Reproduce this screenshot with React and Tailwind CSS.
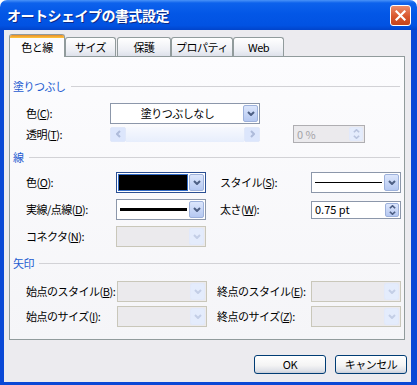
import clsx from "clsx";

const ui = "font-['Noto_Sans_CJK_JP','Noto_Sans',sans-serif]";

function Chevron({ dir = "down", color, w = 8, h = 5 }) {
  const pts = {
    down: "1,1 4,4 7,1",
    up: "1,4 4,1 7,4",
  };
  return (
    <svg width={w} height={h} viewBox="0 0 8 5" preserveAspectRatio="none">
      <polyline points={pts[dir]} fill="none" stroke={color} strokeWidth="2" />
    </svg>
  );
}

function SideChevron({ dir, color }) {
  return (
    <svg width="5" height="8" viewBox="0 0 5 8">
      <polyline points={dir === "left" ? "4,1 1,4 4,7" : "1,1 4,4 1,7"} fill="none" stroke={color} strokeWidth="2" />
    </svg>
  );
}

function DropBtn({ disabled }) {
  return (
    <div
      className={clsx(
        "flex w-[15px] shrink-0 items-center justify-center rounded-[2px] border",
        disabled
          ? "border-[#E2E9FA] bg-[#E4ECFC]"
          : "border-[#9DB1DB] bg-[linear-gradient(to_bottom,#DCE6FC,#B5C8F1)]"
      )}
    >
      <Chevron color={disabled ? "#C3CEE6" : "#4D5F84"} />
    </div>
  );
}

function Combo({ className, tone = "normal", children }) {
  return (
    <div
      className={clsx(
        "flex h-[21px] shrink-0 border p-[1px]",
        tone === "disabled" && "border-[#C9C7BA] bg-[#EBEAED]",
        tone === "normal" && "border-[#8C97AA] bg-white",
        tone === "focus" && "border-[#2B4F93] bg-white",
        className
      )}
    >
      <div className="flex min-w-0 flex-1 items-center">{children}</div>
      <DropBtn disabled={tone === "disabled"} />
    </div>
  );
}

function ScrollBtn({ dir }) {
  return (
    <div className="flex w-[16px] shrink-0 items-center justify-center rounded-[2px] border border-[#E0E8FA] bg-[#DCE6FC]">
      <SideChevron dir={dir} color="#AEBBDA" />
    </div>
  );
}

function Slider() {
  return (
    <div className="flex h-[15px] w-[150px] shrink-0">
      <ScrollBtn dir="left" />
      <div className="flex-1 bg-[linear-gradient(to_bottom,#F7F9FE,#E7EEFC)]" />
      <ScrollBtn dir="right" />
    </div>
  );
}

function Spin({ className, disabled, value }) {
  const c = disabled ? "#B9C4DE" : "#4D5F84";
  return (
    <div
      className={clsx(
        "flex shrink-0 border p-[1px]",
        disabled ? "border-[#AFAEB2] bg-[#EBEAED] text-[#A3A2A6]" : "border-[#8C97AA] bg-white text-black",
        className
      )}
    >
      <span className="flex-1 self-center pl-[2px] leading-none tracking-normal">{value}</span>
      <div
        className={clsx(
          "flex w-[14px] flex-col items-center justify-center gap-[2px] rounded-[2px] border",
          disabled ? "border-[#E2E9FA] bg-[#E4ECFC]" : "border-[#9DB1DB] bg-[linear-gradient(to_bottom,#DCE6FC,#B5C8F1)]"
        )}
      >
        <Chevron dir="up" color={c} w={7} h={4} />
        <Chevron dir="down" color={c} w={7} h={4} />
      </div>
    </div>
  );
}

function Label({ text, k, className }) {
  return (
    <div className={clsx("shrink-0 whitespace-nowrap", className)}>
      {text}(<u>{k}</u>):
    </div>
  );
}

function Section({ label, className }) {
  return (
    <div className={clsx("flex h-[14px] items-center pl-[3px] pr-[4px] leading-[14px]", className)}>
      <span className="text-[#1D5BD0]">{label}</span>
      <div className="ml-[5px] h-px flex-1 bg-[#D2D2D6]" />
    </div>
  );
}

const tabs = [
  { label: "サイズ", w: "w-[51px]" },
  { label: "保護", w: "w-[54px] ml-[1px]" },
  { label: "プロパティ", w: "w-[62px]" },
  { label: "Web", w: "w-[51px]" },
];

export default function App() {
  return (
    <div className={clsx("flex h-[385px] w-[417px] flex-col overflow-hidden text-[11px] tracking-[-0.5px] text-black", ui)}>
      {/* title bar */}
      <div className="flex h-[30px] shrink-0 items-center justify-between rounded-t-[7px] bg-[linear-gradient(to_bottom,#4A93F8_0%,#0D62EC_10%,#0357E7_45%,#0152E2_85%,#0144CB_100%)] pl-[7px] pr-[6px]">
        <span className="text-[14px] font-bold tracking-[-0.5px] text-white [text-shadow:1px_1px_#0B2A8A]">
          オートシェイプの書式設定
        </span>
        <div className="flex h-[21px] w-[21px] items-center justify-center rounded-[3px] border border-white bg-[linear-gradient(to_bottom,#EB8C6C,#D9572D_55%,#C4441C)]">
          <svg width="11" height="11" viewBox="0 0 11 11">
            <path d="M1.5 1.5 L9.5 9.5 M9.5 1.5 L1.5 9.5" stroke="white" strokeWidth="2.2" strokeLinecap="square" />
          </svg>
        </div>
      </div>

      {/* window body */}
      <div className="flex flex-1 flex-col border-b-[3px] border-l-4 border-r-[6px] border-[#0A48D6] bg-[#ECEBEF] pl-[5px] pr-[4px] pt-[4px]">
        {/* tabs */}
        <div className="flex h-[22px] items-end">
          <div className="relative z-10 -mb-px flex h-[23px] w-[56px] flex-col rounded-t-[3px] border border-b-0 border-[#919B9C] bg-[#FCFCFE]">
            <div className="h-[3px] rounded-t-[2px] bg-[linear-gradient(to_bottom,#E68B2C,#FFC73C)]" />
            <div className="flex flex-1 items-center justify-center">色と線</div>
          </div>
          {tabs.map((t) => (
            <div
              key={t.label}
              className={clsx(
                "flex h-[19px] items-center justify-center rounded-t-[3px] border border-b-0 border-[#919B9C] bg-[linear-gradient(to_bottom,#FFFFFF,#ECEEF4_70%,#DDE1EA)]",
                t.w
              )}
            >
              {t.label}
            </div>
          ))}
        </div>

        {/* tab panel */}
        <div className="mr-[2px] flex h-[284px] flex-col border border-[#919B9C] bg-[linear-gradient(to_bottom,#FCFCFE,#F5F5F8)]">
          <Section label="塗りつぶし" className="mt-[22px]" />
          <div className="mt-[10px] flex h-[21px] items-center pl-[16px]">
            <Label text="色" k="C" className="w-[84px]" />
            <Combo className="w-[150px]">
              <span className="flex-1 text-center">塗りつぶしなし</span>
            </Combo>
          </div>
          <div className="mt-[1px] flex h-[18px] items-center pl-[16px]">
            <Label text="透明" k="T" className="w-[84px]" />
            <Slider />
            <Spin disabled value="0 %" className="ml-[33px] h-[18px] w-[72px]" />
          </div>

          <Section label="線" className="mt-[7px]" />
          <div className="mt-[8px] flex h-[21px] items-center pl-[16px]">
            <Label text="色" k="O" className="w-[90px]" />
            <Combo tone="focus" className="w-[90px]">
              <div className="mr-[1px] h-full flex-1 bg-[#316AC5] p-[1px]">
                <div className="h-full bg-black" />
              </div>
            </Combo>
            <Label text="スタイル" k="S" className="ml-[14px] w-[91px]" />
            <Combo className="w-[90px]">
              <div className="mx-[2px] h-px flex-1 bg-black" />
            </Combo>
          </div>
          <div className="mt-[6px] flex h-[21px] items-center pl-[16px]">
            <Label text="実線/点線" k="D" className="w-[90px]" />
            <Combo className="w-[90px]">
              <div className="mx-[2px] h-[3px] flex-1 bg-black" />
            </Combo>
            <Label text="太さ" k="W" className="ml-[14px] w-[91px]" />
            <Spin value="0.75 pt" className="h-[18px] w-[90px]" />
          </div>
          <div className="mt-[6px] flex h-[21px] items-center pl-[16px]">
            <Label text="コネクタ" k="N" className="w-[90px]" />
            <Combo tone="disabled" className="w-[90px]" />
          </div>

          <Section label="矢印" className="mt-[9px]" />
          <div className="mt-[11px] flex h-[21px] items-center pl-[16px]">
            <Label text="始点のスタイル" k="B" className="w-[91px]" />
            <Combo tone="disabled" className="w-[90px]" />
            <Label text="終点のスタイル" k="E" className="ml-[10px] w-[94px]" />
            <Combo tone="disabled" className="w-[90px]" />
          </div>
          <div className="mt-[4px] flex h-[21px] items-center pl-[16px]">
            <Label text="始点のサイズ" k="I" className="w-[91px]" />
            <Combo tone="disabled" className="w-[90px]" />
            <Label text="終点のサイズ" k="Z" className="ml-[10px] w-[94px]" />
            <Combo tone="disabled" className="w-[90px]" />
          </div>
        </div>

        {/* buttons */}
        <div className="mt-[15px] flex justify-end gap-[9px]">
          {["OK", "キャンセル"].map((b) => (
            <button
              key={b}
              className="h-[19px] w-[72px] rounded-[3px] border border-[#003C74] bg-[linear-gradient(to_bottom,#FFFFFF,#F4F4F4_55%,#DDE0E7_88%,#C6CCD8)] text-[11px] leading-none"
            >
              {b}
            </button>
          ))}
        </div>
      </div>
    </div>
  );
}
